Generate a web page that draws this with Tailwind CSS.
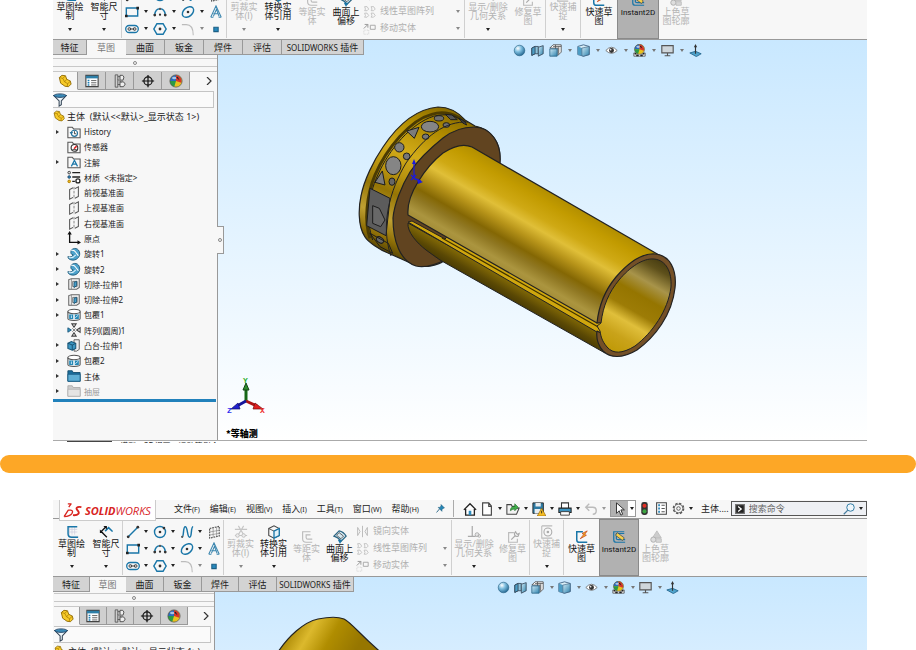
<!DOCTYPE html>
<html lang="zh-CN">
<head>
<meta charset="utf-8">
<title>SOLIDWORKS</title>
<script src="https://cdn.jsdelivr.net/npm/@tailwindcss/browser@4"></script>
</head>
<body class="flex h-screen flex-col overflow-hidden bg-white font-['Noto_Sans','Noto_Sans_CJK_SC',sans-serif] text-[9px] leading-[9px] text-[#222]">

<svg class="absolute size-0" aria-hidden="true">
  <defs>
    <linearGradient id="tube" gradientUnits="userSpaceOnUse" x1="565" y1="201" x2="520" y2="279">
      <stop offset="0" stop-color="#b38f00"/><stop offset=".12" stop-color="#c29b00"/><stop offset=".3" stop-color="#cfa914"/><stop offset=".42" stop-color="#e0bf38"/><stop offset=".55" stop-color="#b8951a"/><stop offset=".7" stop-color="#846704"/><stop offset=".8" stop-color="#8f7722"/><stop offset=".93" stop-color="#ab953f"/><stop offset="1" stop-color="#a58e38"/>
    </linearGradient>
    <linearGradient id="under" gradientUnits="userSpaceOnUse" x1="510" y1="279" x2="498" y2="300">
      <stop offset="0" stop-color="#8a7007"/><stop offset=".5" stop-color="#5a4804"/><stop offset="1" stop-color="#3a2f05"/>
    </linearGradient>
    <linearGradient id="bore" gradientUnits="userSpaceOnUse" x1="665" y1="258" x2="612" y2="350">
      <stop offset="0" stop-color="#3e350d"/><stop offset=".13" stop-color="#5e501b"/><stop offset=".28" stop-color="#a8944a"/><stop offset=".42" stop-color="#957500"/><stop offset=".58" stop-color="#9d7c06"/><stop offset=".7" stop-color="#e0bf3b"/><stop offset=".85" stop-color="#c9a31a"/><stop offset="1" stop-color="#c09a08"/>
    </linearGradient>
    <linearGradient id="flange" gradientUnits="userSpaceOnUse" x1="440" y1="107" x2="372" y2="250">
      <stop offset="0" stop-color="#8b6d00"/><stop offset=".15" stop-color="#b08b00"/><stop offset=".35" stop-color="#d2ab18"/><stop offset=".5" stop-color="#b89310"/><stop offset=".62" stop-color="#957505"/><stop offset=".78" stop-color="#bfa032"/><stop offset=".9" stop-color="#8c6d06"/><stop offset="1" stop-color="#4a3b05"/>
    </linearGradient>
    <linearGradient id="cap" gradientUnits="userSpaceOnUse" x1="290" y1="625" x2="350" y2="660">
      <stop offset="0" stop-color="#a58200"/><stop offset=".3" stop-color="#dcb92d"/><stop offset=".6" stop-color="#b08d00"/><stop offset="1" stop-color="#967600"/>
    </linearGradient>
    <linearGradient id="blueFace" x1="0" y1="0" x2="1" y2="1"><stop offset="0" stop-color="#cfeaf6"/><stop offset="1" stop-color="#2f83ae"/></linearGradient>
    <radialGradient id="ballFill" cx=".35" cy=".3" r=".8"><stop offset="0" stop-color="#fff"/><stop offset=".4" stop-color="#7fbfe0"/><stop offset="1" stop-color="#175a85"/></radialGradient>
  </defs>

  <symbol id="part" viewBox="0 0 16 16"><path d="M1.500 4l3-2.500 4 .5 1.500 4 4 2 1 3.500-3 3-4-.5-5-3.500z" fill="#f7ca28" stroke="#8a6500"/><path d="M1.500 4l4 1 2 4 3.500 2-.5 3.500M5.500 5l3-3M7.500 9L10 6M11 11l3.500-3" fill="none" stroke="#a37800" stroke-width=".8"/></symbol>
  <symbol id="list" viewBox="0 0 16 16"><path d="M1 1.500h14v13H1z" fill="#fff" stroke="#444" stroke-width="1.300"/><path d="M1 2h14v3H1z" fill="#2d7fa8"/><path d="M3 7.500h2M3 10h2M3 12.500h2" stroke="#1b7db3" stroke-width="1.600"/><path d="M7 7.500h6M7 10h6M7 12.500h6" stroke="#555"/></symbol>
  <symbol id="props" viewBox="0 0 16 16"><path d="M2 1h12v14H2z" fill="#fff" stroke="#444" stroke-width="1.300"/><path d="M4 4h2M4 8h2M4 12h2" stroke="#1b7db3" stroke-width="2.200"/><path d="M8 4h4M8 8h4M8 12h4" stroke="#555" stroke-width="1.300"/></symbol>
  <symbol id="config" viewBox="0 0 16 16"><path d="M2.500 1h3v14h-3zM5.500 3h3M5.500 12h3" fill="none" stroke="#555"/><path d="M8 1.500h3l1.500 2-1 3.500H8zM8 9h4l2 2.500-2 3H8z" fill="#eee" stroke="#444"/><path d="M5.500 6l4 4" stroke="#555"/></symbol>
  <symbol id="target" viewBox="0 0 16 16"><circle cx="8" cy="8" r="4.700" fill="none" stroke="#111" stroke-width="1.400"/><path d="M8 1v14M1 8h14" stroke="#111" stroke-width="1.400"/></symbol>
  <symbol id="ball4" viewBox="0 0 16 16"><circle cx="8" cy="8" r="7" fill="#e8c21e"/><path d="M8 8V1a7 7 0 0 0-7 7z" fill="#2a6bc0"/><path d="M8 8V1a7 7 0 0 1 6 9z" fill="#d8352c"/><path d="M8 8L1 8a7 7 0 0 0 5 6.700z" fill="#2b9b45"/><path d="M8 4l4 3-2-4z" fill="#222"/><circle cx="8" cy="8" r="7" fill="none" stroke="#555" stroke-width=".8"/><ellipse cx="6" cy="4.500" rx="2.500" ry="1.500" fill="#fff" opacity=".6"/></symbol>
  <symbol id="funnel" viewBox="0 0 16 16"><path d="M1 3l6 6v6l2.500-1.500V9L15 3z" fill="#eef6fa" stroke="#345" stroke-width="1.200"/><ellipse cx="8" cy="3" rx="7" ry="2" fill="#3a8bb8" stroke="#246"/></symbol>
  <symbol id="folderBox" viewBox="0 0 16 16"><path d="M1 2.500h5l1.500 2H15v10H1z" fill="#f8f8f8" stroke="#555" stroke-width="1.200"/></symbol>
  <symbol id="history" viewBox="0 0 16 16"><use href="#folderBox"/><circle cx="8.500" cy="9.500" r="3.500" fill="#fff" stroke="#27739c" stroke-width="1.300"/><path d="M8.500 7v3h2" fill="none" stroke="#333"/><path d="M3 8l2 3 2-3z" fill="#27739c"/></symbol>
  <symbol id="sensor" viewBox="0 0 16 16"><use href="#folderBox"/><circle cx="8.500" cy="9" r="3.800" fill="#fff" stroke="#333" stroke-width="1.300"/><path d="M8 10l3-3" stroke="#d22" stroke-width="1.800"/><path d="M6 11h5" stroke="#333"/></symbol>
  <symbol id="annot" viewBox="0 0 16 16"><use href="#folderBox"/><path d="M5 13l3.500-7 3.500 7M6.500 10.500h4" fill="none" stroke="#1a77a9" stroke-width="1.400"/></symbol>
  <symbol id="material" viewBox="0 0 16 16"><path d="M6 3h9M6 8h9M6 13h3" stroke="#222" stroke-width="1.700"/><circle cx="2.500" cy="3" r="1.500" fill="#ddd" stroke="#333"/><circle cx="2.500" cy="8" r="1.500" fill="#2a8cc0" stroke="#246"/><circle cx="2.500" cy="13" r="1.500" fill="#f0bd1d" stroke="#a70"/><circle cx="12.500" cy="12.500" r="2.300" fill="#fff" stroke="#222" stroke-width="1.500"/></symbol>
  <symbol id="plane" viewBox="0 0 16 16"><path d="M7 2L3 4v11l4-2M9 3l4-2v11l-4 2" fill="none" stroke="#555" stroke-width="1.200"/><path d="M8 1v14" stroke="#777" stroke-dasharray="3 1.500"/></symbol>
  <symbol id="origin" viewBox="0 0 16 16"><path d="M3 2v11h11" fill="none" stroke="#111" stroke-width="1.500"/><path d="M3 0L.500 4h5zM16 13l-4-2.500v5z" fill="#111"/></symbol>
  <symbol id="revolve" viewBox="0 0 16 16"><path d="M4.500 5C5 1 12 0 14 5c2 5-2 10-7 10-4 0-6-2-6-4 3 1 5 0 6-2-2 0-3-2-2.500-4z" fill="#4da2cb" stroke="#1a5677"/><path d="M5 4q3-1 5 2l3 4" fill="none" stroke="#fff" stroke-width="1.300"/><path d="M2 12q5 1 8-3" fill="none" stroke="#d8f0fb" stroke-width="1.200"/></symbol>
  <symbol id="cut" viewBox="0 0 16 16"><path d="M2 3l3-1h9v10l-3 2H2z" fill="#f4f4f4" stroke="#666" stroke-width="1.200"/><path d="M5 2v12" stroke="#888"/><path d="M6.500 5h5v6h-5z" fill="#fff" stroke="#666"/><path d="M8 6l3-1v5l-3 2z" fill="#4a9fc8" stroke="#1a5677"/></symbol>
  <symbol id="wrap" viewBox="0 0 16 16"><path d="M1 4v8c0 3 14 3 14 0V4" fill="#e3eef3" stroke="#555" stroke-width="1.200"/><ellipse cx="8" cy="4" rx="7" ry="2.500" fill="#fff" stroke="#555" stroke-width="1.200"/><path d="M2.500 7.500h4.500v5H2.500zM9 7.500h4.500v5H9z" fill="#2488b5"/><path d="M5 8.500v3M9.500 11l3-2.500" stroke="#def"/></symbol>
  <symbol id="pattern" viewBox="0 0 16 16"><path d="M5.500 1h5L8 5z M5.500 15h5L8 11zM15 5.500v5L11 8z" fill="#f4f4f4" stroke="#444" stroke-width="1.200"/><path d="M1 5.500v5L5 8z" fill="#3a9ac8" stroke="#1a5677"/><path d="M6 6l4 4M10 6l-4 4" stroke="#777"/></symbol>
  <symbol id="boss" viewBox="0 0 16 16"><path d="M8 2h6v11l-3 2H8z" fill="#eee" stroke="#555"/><path d="M1 6l4-2 5 2v6l-4 2-5-2z" fill="#3d98c4" stroke="#1a5677" stroke-width="1.200"/><path d="M1 6l5 2 4-2M6 8v6" fill="none" stroke="#174c69"/></symbol>
  <symbol id="folder" viewBox="0 0 16 16"><path d="M1 2h5l1 2h8v10H1z" fill="#1b6d9b" stroke="#134b6b"/><path d="M1 6h14v8H1z" fill="#5faed4" stroke="#1a5d85"/></symbol>
  <symbol id="folderGray" viewBox="0 0 16 16"><path d="M1 2h5l1 2h8v10H1z" fill="#ccc" stroke="#aaa"/><path d="M1 6h14v8H1z" fill="#e4e4e4" stroke="#b5b5b5"/></symbol>

  <symbol id="sketch" viewBox="0 0 16 16"><path d="M5 2v11h10M8 2v9M11 2v9M5 5h9M5 8h9" fill="none" stroke="#ccd" stroke-width=".8"/><path d="M14 2H3.500v8q0 4 4 4H15" fill="none" stroke="#1976a8" stroke-width="1.700"/></symbol>
  <symbol id="dim" viewBox="0 0 16 16"><path d="M7 7l4-4 4.500 4.500" fill="none" stroke="#1976a8" stroke-width="1.800"/><path d="M2 8l6-6M3 8l6 6" stroke="#111" stroke-width="1.500"/><path d="M1 5v4h4zM9 1H5l4 4z" fill="#111"/></symbol>
  <symbol id="line" viewBox="0 0 16 16"><path d="M2 14L14 2" stroke="#1976a8" stroke-width="1.600"/><circle cx="2.500" cy="13.500" r="1.600" fill="#333"/><circle cx="13.500" cy="2.500" r="1.600" fill="#333"/></symbol>
  <symbol id="circle" viewBox="0 0 16 16"><circle cx="8" cy="8" r="6.300" fill="none" stroke="#1976a8" stroke-width="1.600"/><circle cx="8" cy="8" r="1.500" fill="#333"/><circle cx="12.500" cy="3.500" r="1.500" fill="#333"/></symbol>
  <symbol id="spline" viewBox="0 0 16 16"><path d="M2 14C5 14 3 2 6 2s2 12 5 12 1-12 4-12" fill="none" stroke="#1976a8" stroke-width="1.700"/><circle cx="2.500" cy="13.500" r="1.300" fill="#555"/></symbol>
  <symbol id="gridplane" viewBox="0 0 16 16"><path d="M3 4l11-2.500v11L3 15z" fill="none" stroke="#555" stroke-width="1.300" stroke-dasharray="2 1"/><path d="M7 3v11M11 2v11M3 8l11-2M3 11.500l11-2" stroke="#888" stroke-width=".8"/></symbol>
  <symbol id="rect" viewBox="0 0 16 16"><path d="M1.500 3.500h13v9h-13z" fill="none" stroke="#1976a8" stroke-width="1.600"/><path d="M0 11h3v3H0zM13 2h3v3h-3z" fill="#222"/></symbol>
  <symbol id="arc" viewBox="0 0 16 16"><path d="M2 11C3 2 13 2 14 11" fill="none" stroke="#1976a8" stroke-width="1.600"/><circle cx="2" cy="11.500" r="1.600" fill="#333"/><circle cx="14" cy="11.500" r="1.600" fill="#333"/><circle cx="8" cy="11" r="1.300" fill="#333"/><circle cx="8" cy="4.500" r="1.300" fill="#555"/></symbol>
  <symbol id="ellipse" viewBox="0 0 16 16"><ellipse cx="8" cy="8" rx="7.300" ry="5" transform="rotate(-40 8 8)" fill="none" stroke="#1976a8" stroke-width="1.600"/><circle cx="8" cy="8" r="1.500" fill="#333"/></symbol>
  <symbol id="glyphA" viewBox="0 0 16 16"><path d="M2 14L8 1l6 13M5 10h6M2 14h3M11 14h3M5 13l3.500-8 3 8" fill="none" stroke="#3b86af" stroke-width="1.200"/></symbol>
  <symbol id="slot" viewBox="0 0 16 16"><rect x=".8" y="4" width="14.400" height="8" rx="4" fill="none" stroke="#1976a8" stroke-width="1.500"/><circle cx="5" cy="8" r="1.600" fill="none" stroke="#333"/><circle cx="11" cy="8" r="1.600" fill="none" stroke="#333"/><path d="M5 8h6" stroke="#333"/></symbol>
  <symbol id="hex" viewBox="0 0 16 16"><path d="M4.500 2h7L15 8l-3.500 6h-7L1 8z" fill="none" stroke="#1976a8" stroke-width="1.700"/><circle cx="8" cy="8" r="1.600" fill="#333"/></symbol>
  <symbol id="fillet" viewBox="0 0 16 16"><path d="M1 3h5q8 0 8 12" fill="none" stroke="#bbb" stroke-width="1.200"/></symbol>
  <symbol id="point" viewBox="0 0 16 16"><path d="M5.500 6h5v5h-5z" fill="#2888bb" stroke="#1d5f85" stroke-width="1.200"/></symbol>
  <symbol id="trim" viewBox="0 0 16 16"><path d="M1 5h14M1 12h14M5 1l6 10M11 1L5 11" fill="none" stroke="#c4c4c4" stroke-width="1.200"/><circle cx="4" cy="12" r="2" fill="#eee" stroke="#bbb"/><circle cx="11" cy="12" r="2" fill="#eee" stroke="#bbb"/></symbol>
  <symbol id="convert" viewBox="0 0 16 16"><path d="M2 4l6-3 6 3v8l-6 3-6-3z" fill="#f6f6f6" stroke="#444" stroke-width="1.200"/><path d="M2 4l6 3 6-3" fill="none" stroke="#444"/><path d="M8 7v8l6-3V4z" fill="#e2f1f8" stroke="#1976a8" stroke-width="1.500"/></symbol>
  <symbol id="offset" viewBox="0 0 16 16"><path d="M12 2H3v8q0 4 4 4h7M12 5.500H7v3q0 2 2 2h5" fill="none" stroke="#bbb" stroke-width="1.300"/></symbol>
  <symbol id="surfoff" viewBox="0 0 16 16"><path d="M1 7l6-6q5 1 8 6l-6 6q-2-4-8-6z" fill="#d6e9f2" stroke="#2b6583" stroke-width="1.400"/><path d="M4 6l3-3 5 4-3 3z" fill="none" stroke="#555"/><path d="M5.500 11l2.500 5 2.500-5z" fill="#1976a8"/></symbol>
  <symbol id="mirror" viewBox="0 0 16 16"><path d="M2 3v10l3-5zM14 3v10l-3-5zM8 1v14" fill="none" stroke="#bbb" stroke-width="1.200"/></symbol>
  <symbol id="lpattern" viewBox="0 0 16 16"><path d="M2 2h3l2 3-2 2H2l1-2zM10 2h3l2 3-2 2h-3l1-2zM2 10h3l2 3-2 2H2l1-2zM10 10h3l2 3-2 2h-3l1-2z" fill="none" stroke="#bbb"/></symbol>
  <symbol id="move" viewBox="0 0 16 16"><path d="M9 4h6v5H9z" fill="none" stroke="#aaa" stroke-width="1.200"/><path d="M1 8l5-5M2 3h4v4" fill="none" stroke="#999" stroke-width="1.200"/><path d="M1 10h6v5H1z" fill="none" stroke="#ccc" stroke-dasharray="1 1"/></symbol>
  <symbol id="relation" viewBox="0 0 16 16"><path d="M6 1v12M1 13h9" stroke="#aaa" stroke-width="1.400"/><circle cx="11.500" cy="11" r="2.200" fill="#e5e5e5" stroke="#aaa"/><circle cx="14" cy="12.500" r="1.500" fill="none" stroke="#aaa"/></symbol>
  <symbol id="repair" viewBox="0 0 16 16"><path d="M9 3H3v11h10v-4" fill="none" stroke="#bbb" stroke-width="1.300"/><path d="M6 11l5-5M11 2q-2 2-1 4t4 1l1-3-2 1-1-1z" fill="none" stroke="#aaa" stroke-width="1.300"/></symbol>
  <symbol id="snap" viewBox="0 0 16 16"><path d="M2 1v14h12M2 1h12" fill="none" stroke="#bbb" stroke-width="1.200"/><circle cx="9" cy="8" r="4.500" fill="none" stroke="#aaa" stroke-width="1.200"/><circle cx="9" cy="8" r="1.500" fill="#aaa"/></symbol>
  <symbol id="rapid" viewBox="0 0 16 16"><path d="M9 2H2v9q0 3 3 3h9" fill="none" stroke="#1976a8" stroke-width="1.700"/><path d="M14 1L8 4l2 1-4 5 7-4-2-1z" fill="#f5b21c" stroke="#c0391b" stroke-width=".8"/></symbol>
  <symbol id="instant" viewBox="0 0 16 16"><path d="M14 2H2v9q0 3 3 3h10M14 4H5v6q0 1 2 1h8" fill="none" stroke="#1976a8" stroke-width="1.400"/><path d="M6 3l8 6-2 3-8-6z" fill="#f4d04a" stroke="#444" stroke-width=".8"/></symbol>
  <symbol id="shade" viewBox="0 0 16 16"><path d="M9 1l5 8H4z" fill="#ccc" stroke="#bbb"/><circle cx="5" cy="11" r="3" fill="#ddd" stroke="#aaa"/><path d="M8 10h6v4H8z" fill="#d6d6d6" stroke="#bbb"/></symbol>

  <symbol id="zoomball" viewBox="0 0 16 16"><circle cx="8" cy="8" r="6.500" fill="url(#ballFill)" stroke="#2a6486" stroke-width=".8"/></symbol>
  <symbol id="section" viewBox="0 0 16 16"><path d="M1 5l4-2h4v9H5l-4 2z" fill="#8fc2da" stroke="#345"/><path d="M1 5l4-2v9l-4 2z" fill="#4c9cc4" stroke="#345"/><path d="M9 4l6-2v10l-6 3z" fill="url(#blueFace)" stroke="#345"/></symbol>
  <symbol id="viewcube" viewBox="0 0 16 16"><path d="M5 1h10v9l-4 4V5H1z" fill="#fff" stroke="#444"/><path d="M8 1v9M5 3h10M12 3v9" stroke="#555"/><path d="M1 6h9v9H1z" fill="url(#blueFace)" stroke="#2a6486"/></symbol>
  <symbol id="cube" viewBox="0 0 16 16"><path d="M1 3l7-2 7 2v10l-7 2-7-2z" fill="#d8edf6" stroke="#357"/><path d="M1 3l5 2v9.500L1 13z" fill="#4c9cc4"/><path d="M6 5l9-2v10l-7 2-2-.5z" fill="url(#blueFace)" stroke="#357" stroke-width=".7"/></symbol>
  <symbol id="eye" viewBox="0 0 16 16"><path d="M1 8q7-8 14 0-7 7-14 0z" fill="#fff" stroke="#666"/><circle cx="8" cy="8" r="3" fill="#333"/><circle cx="7" cy="7" r="1" fill="#fff"/></symbol>
  <symbol id="scene" viewBox="0 0 16 16"><path d="M1 11h14v4H1z" fill="#eee" stroke="#333" stroke-width=".8"/><path d="M2 11h2v2H2zM12 11h2v2h-2zM4 13h3v2H4zM9 13h3v2H9z" fill="#222"/><g transform="translate(1 -.5) scale(.88)"><use href="#ball4"/></g></symbol>
  <symbol id="monitor" viewBox="0 0 16 16"><path d="M1 2h14v9H1z" fill="#cfd6db" stroke="#555" stroke-width="1.400"/><path d="M8 11v3M4.500 14.500h7" stroke="#555" stroke-width="1.400"/></symbol>
  <symbol id="normal" viewBox="0 0 16 16"><path d="M1 11l7-2 7 3-6 3.500z" fill="#4fa3cc" stroke="#1d6088"/><path d="M8 12V2" stroke="#333" stroke-width="1.400"/><path d="M8 0L6 4h4z" fill="#333"/></symbol>

  <symbol id="home" viewBox="0 0 16 16"><path d="M1 9l7-7 7 7M3 8v7h10V8" fill="#fff" stroke="#222" stroke-width="1.500"/><path d="M6.500 10h3v5h-3z" fill="#2c8bbd"/></symbol>
  <symbol id="file" viewBox="0 0 16 16"><path d="M3 1h7l3 3.500V15H3zM10 1v4h3" fill="#fff" stroke="#444" stroke-width="1.300"/></symbol>
  <symbol id="open" viewBox="0 0 16 16"><path d="M1 14V3h5l1 2h4l1 2h3l-3 7z" fill="#f2f2f2" stroke="#444" stroke-width="1.200"/><path d="M5 10q0-5 5-5V2l4 4-4 4V8q-3 0-5 2z" fill="#3fae49" stroke="#1f6d29" stroke-width=".7"/></symbol>
  <symbol id="save" viewBox="0 0 16 16"><path d="M1 1h12v12H1z" fill="#2d7aa3" stroke="#222"/><path d="M4 1h6v4H4zM3 8h7v5H3z" fill="#e9eef1"/><path d="M11 7l5 9H6z" fill="#f6be24" stroke="#8a5c00" stroke-width=".7"/><path d="M11 10v3" stroke="#222"/></symbol>
  <symbol id="print" viewBox="0 0 16 16"><path d="M4 7V1h8v6" fill="#fff" stroke="#333" stroke-width="1.200"/><path d="M1 7h14v5H1z" fill="#3c94c1" stroke="#222" stroke-width="1.200"/><path d="M3 11h10v4H3z" fill="#fff" stroke="#333"/></symbol>
  <symbol id="undo" viewBox="0 0 16 16"><path d="M2 6h8q4 0 4 4t-4 4M6 2L2 6l4 4" fill="none" stroke="#bbb" stroke-width="1.600"/></symbol>
  <symbol id="cursor" viewBox="0 0 16 16"><path d="M4 1v12l3-3 2 5 2-1-2-5h4z" fill="#fff" stroke="#222"/></symbol>
  <symbol id="light" viewBox="0 0 16 16"><rect x="4" y="0" width="8" height="16" rx="3" fill="#333"/><circle cx="8" cy="4.500" r="2.500" fill="#e22f25"/><circle cx="8" cy="11.500" r="2.500" fill="#3ca541"/></symbol>
  <symbol id="gear" viewBox="0 0 16 16"><circle cx="8" cy="8" r="6.200" fill="none" stroke="#555" stroke-width="2" stroke-dasharray="2.870 2"/><circle cx="8" cy="8" r="5.300" fill="#f7f7f7" stroke="#555"/><circle cx="8" cy="8" r="2.200" fill="none" stroke="#555" stroke-width="1.100"/></symbol>
  <symbol id="prompt" viewBox="0 0 16 16"><path d="M0 0h16v16H0z" fill="#777"/><path d="M2 2h12v12H2z" fill="#222"/><path d="M5 4l5 4-5 4" fill="none" stroke="#fff" stroke-width="2"/></symbol>
  <symbol id="search" viewBox="0 0 16 16"><circle cx="10" cy="6" r="5" fill="#eef6fb" stroke="#2f7aa3" stroke-width="1.300"/><path d="M6.500 9.500L1 15" stroke="#4a7f9f" stroke-width="1.700"/></symbol>
  <symbol id="pin" viewBox="0 0 16 16"><path d="M9 1l6 6-2 .5-2.500 2.500v3L4 6h3l2-2.500z" fill="#2585b5" stroke="#145779"/><path d="M6 9l-5 6" stroke="#145779" stroke-width="1.500"/></symbol>
  <symbol id="ds" viewBox="0 0 20 16"><path d="M5 1h3.500L6 4.500M1 14.500L5.500 7.500H8q3 .5 1.500 3.500-2 3-8.500 3.500" fill="none" stroke="#d8241f" stroke-width="1.400" stroke-linejoin="round"/><path d="M19.500 4.500c-5-1-6.500 1-4 3.500s1 5.500-5 5" fill="none" stroke="#d8241f" stroke-width="1.900"/></symbol>
</svg>

<section id="first" class="relative mr-[49px] ml-[53px] shrink-0 overflow-hidden bg-[#f7f7f7]"></section>
<div class="mt-3 h-[18px] shrink-0 rounded-full bg-[#fda726]"></div>
<section id="second" class="mt-[27px] mr-[49px] ml-[53px] flex min-h-0 flex-1 flex-col overflow-hidden bg-[#f7f7f7]"></section>

<template id="model">
  <svg class="absolute inset-0 h-full w-full" role="img" aria-label="主体">
    <g transform="translate(-218 -40)" stroke-linejoin="round">
      <path d="M438 107C450 107 458 112 465 120L475 126C492 129 503 145 499 164L445 260C438 266 425 268 415 265L388 253C380 250 368 242 365 237C357 225 359 205 361 196C364 180 374 160 383 147C397 126 415 109 438 107Z" fill="url(#flange)" stroke="#222" stroke-width="1.200"/>
      <g transform="translate(350 95) scale(.33333)" stroke="#1c1c1c" stroke-width="3">
        <path d="M60 430C42 380 50 300 75 240C110 160 180 75 245 58C280 48 320 55 345 83" fill="none" stroke="#4b3b02" stroke-width="9"/>
        <path d="M68 435C48 380 55 300 82 243C118 160 185 85 250 64C290 54 320 60 340 82" fill="none"/>
        <path d="M60 280L120 310L108 422L50 392Z" fill="#5c5c5c"/>
        <path d="M68 332L88 340L105 375L92 395L68 385Z" fill="#686868"/>
        <path d="M170 108L207 97L193 130ZM75 262L97 228L105 270Z" fill="#7c7c7c"/>
        <ellipse cx="240" cy="95" rx="26" ry="16" fill="#858585"/><ellipse cx="267" cy="70" rx="14" ry="8" fill="#707070"/>
        <ellipse cx="289" cy="90" rx="10" ry="7" fill="#707070"/><ellipse cx="227" cy="125" rx="10" ry="8" fill="#777"/>
        <circle cx="148" cy="157" r="14" fill="#7d7d7d"/><ellipse cx="130" cy="212" rx="23" ry="27" fill="#858585"/>
        <circle cx="170" cy="184" r="10" fill="#777"/><ellipse cx="126" cy="260" rx="9" ry="11" fill="#666"/>
        <path d="M286 58L306 60L322 74L302 74ZM328 70L345 80L350 90L338 84Z" fill="#555"/>
        <ellipse cx="90" cy="435" rx="12" ry="8" fill="#666" transform="rotate(35 90 435)"/>
        <path d="M60 415L115 445L128 475L90 455Z" fill="none"/>
      </g>
      <path d="M391 256C380 225 390 190 406 163C425 136 445 121 468 122" fill="none" stroke="#222"/>
      <path d="M474 127C490 127 502 142 500 164L445 260C435 265 425 268 416 266C400 261 393 241 393 218C394 205 402 185 410 172C420 157 433 146 443 138C452 131 463 127 474 127Z" fill="#614420" stroke="#222" stroke-width="1.200"/>
      <path d="M408 223C407 232 417 243 426 250L440 260L605 353L612 340L600 330Z" fill="url(#under)" stroke="#222"/>
      <path d="M408 222L412 221L445 239L447 237L602 323L602 335Z" fill="#cfa60d" stroke="#222"/>
      <path d="M442 238L600 328" stroke="#3d3000" stroke-width="1.200"/>
      <path d="M472 147L659 255L640 300L597 323L408 215C407 203 413 190 418 182C424 172 434 160 443 153C452 147 463 143 472 147Z" fill="url(#tube)" stroke="#222" stroke-width="1.200"/>
      <path d="M597 323C599 304 606 289 616 277C628 263 642 253 655 254C670 255 677 270 675 288C672 315 655 337 637 350C622 359 610 358 603 351C598 345 596 338 597 331L601 333C602 320 601 323 597 323Z" fill="#745027" stroke="#222" stroke-width="1.200"/>
      <path d="M601 323C603 306 609 292 619 280C630 267 643 258 654 259C666 260 672 272 671 287C668 311 652 333 635 346C622 354 613 354 607 347C602 341 601 337 600 331L597 326Z" fill="url(#bore)" stroke="#222"/>
      <path d="M414 178V163M414 178L421 181M411 175l5 5M411 180l5-5" stroke="#1a1ae0" stroke-width="1.200"/><path d="M414 159l-2 5h4zM423 182l-6-3 1 5z" fill="#1a1ae0"/>
      <path d="M246 401V389" stroke="#176817" stroke-width="3"/><path d="M246 383l-3 7h6z" fill="#2e8c2e" stroke="#134513"/>
      <path d="M246 401L257 406" stroke="#b01515" stroke-width="3"/><path d="M263 409l-8-6-2 6z" fill="#e02020" stroke="#701010" stroke-width=".7"/>
      <path d="M246 401L237 406" stroke="#15159c" stroke-width="3"/><path d="M231 409l7-6 2 6z" fill="#2020d0" stroke="#101060" stroke-width=".7"/>
      <g font-family="Liberation Mono" font-size="8" font-weight="bold"><text x="243" y="383" fill="#30b030">Y</text><text x="260" y="413" fill="#f03030">X</text><text x="227" y="413" fill="#3030f0">Z</text></g>
      <text x="226" y="437" font-size="9" font-weight="900" fill="#000" font-family="Noto Sans CJK SC">*等轴测</text>
    </g>
  </svg>
</template>

<template id="modelTop">
  <svg class="absolute inset-0 h-full w-full" role="img" aria-label="主体">
    <g transform="translate(-215 -577)"><path d="M276 655C288 636 304 622 318 619C328 617 339 617 344 619C352 623 360 635 384 655Z" fill="url(#cap)" stroke="#222" stroke-width="1.200"/></g>
  </svg>
</template>

<script>
const icon = (id, cls = 'size-[14px]') => `<svg class="${cls} shrink-0" aria-hidden="true"><use href="#${id}"/></svg>`;
const caret = (tone = 'border-t-[#222]') => `<i class="block size-0 shrink-0 border-x-2 border-t-[3px] border-x-transparent ${tone}"></i>`;
const sep = '<i class="my-px w-px shrink-0 bg-[#d0d0d0]"></i>';

// Large command button: a drop-down variant sits higher to leave room for its caret.
function command(id, lines, width, { off = false, drop = '', on = false } = {}) {
  const tone = off ? 'text-[#b4b4b4]' : 'text-[#111]';
  const pad = drop ? 'pt-[6px]' : on ? 'pt-[10px]' : 'pt-[11px]';
  const fill = on ? 'bg-[#b1b1b1] border border-[#8a8a8a] text-[8px]' : '';
  return `<button class="flex shrink-0 flex-col items-center ${width} ${tone} ${pad} ${fill}">${icon(id)}<span class="mt-px whitespace-nowrap text-center">${lines.join('<br>')}</span>${drop ? `<span class="mt-[7px]">${caret(drop)}</span>` : ''}</button>`;
}

function ribbon(w) {
  const dark = 'border-t-[#222]', gray = 'border-t-[#888]';
  const tool = id => `<button aria-label="${id}" class="flex items-center justify-center">${icon(id)}</button>`;
  const c = t => `<span class="flex justify-center">${caret(t)}</span>`;
  const row = (id, label, drop) => `<button class="flex h-[17px] items-center text-[#b0b0b0]">${icon(id, 'size-[13px]')}<span class="ml-1 flex-1 text-left">${label}</span>${drop ? caret(gray) : ''}</button>`;
  return `<div class="flex h-[57px] shrink-0 overflow-hidden font-['Roboto','Noto_Sans_CJK_SC',sans-serif]">
    ${command('sketch', ['草图绘', '制'], w.a, { drop: dark })}${command('dim', ['智能尺', '寸'], w.b, { drop: dark })}${sep}
    <div class="grid shrink-0 content-start items-center pt-1 auto-rows-[17px] ${w.grid}">
      ${tool('line')}${c(dark)}${tool('circle')}${c(dark)}${tool('spline')}${c(dark)}${tool('gridplane')}
      ${tool('rect')}${c(dark)}${tool('arc')}${c(dark)}${tool('ellipse')}${c(dark)}${tool('glyphA')}
      ${tool('slot')}${c(dark)}${tool('hex')}${c(dark)}${tool('fillet')}${c(gray)}${tool('point')}
    </div>${sep}
    ${command('trim', ['剪裁实', '体(I)'], w.c, { off: true, drop: gray })}${command('convert', ['转换实', '体引用'], w.c, { drop: dark })}
    ${command('offset', ['等距实', '体'], w.c, { off: true })}${command('surfoff', ['曲面上', '偏移'], w.c)}
    <div class="flex shrink-0 flex-col pt-1 pr-1 ${w.list}">${row('mirror', '镜向实体')}${row('lpattern', '线性草图阵列', true)}${row('move', '移动实体', true)}</div>${sep}
    ${command('relation', ['显示/删除', '几何关系'], w.rel, { off: true, drop: dark })}${command('repair', ['修复草', '图'], w.c, { off: true })}${sep}
    ${command('snap', ['快速捕', '捉'], w.c, { off: true, drop: dark })}${sep}
    ${command('rapid', ['快速草', '图'], w.rapid)}${command('instant', ['Instant2D'], w.inst, { on: true })}${command('shade', ['上色草', '图轮廓'], w.c, { off: true })}
  </div>`;
}

function tabs(widths) {
  const names = ['特征', '草图', '曲面', '钣金', '焊件', '评估', '<span class="text-[8px]">SOLIDWORKS</span> 插件'];
  return names.map((n, i) => `<button class="h-[15px] shrink-0 whitespace-nowrap border-r border-b font-['Noto_Sans','Noto_Sans_CJK_SC',sans-serif] ${i === 1 ? 'border-transparent bg-[#f7f7f7] text-[#777]' : 'border-[#999] bg-[#d3d3d3] text-[#222]'} ${widths[i]}">${n}</button>`).join('');
}

function panelHead(firstTab, tab) {
  const ids = ['part', 'list', 'config', 'target', 'ball4'];
  return `<div class="mt-[2px] flex h-[9px] items-center justify-center border-y border-[#c8c8c8]"><i class="size-1 rounded-full border border-[#888]"></i></div>
    <div class="mt-1 flex items-center border-t border-[#c8c8c8]">
      ${ids.map((id, i) => `<button aria-label="${id}" class="flex h-[18px] items-center justify-center border-r border-b ${i ? 'border-[#999] bg-[#cfcfcf]' : 'border-[#999] border-b-transparent bg-[#f7f7f7]'} ${i ? tab : firstTab}">${icon(id)}</button>`).join('')}
      <button aria-label="更多" class="ml-auto mr-1 flex size-2 items-center justify-center"><svg class="size-2" viewBox="0 0 8 8"><path d="M2 0l4 4-4 4" fill="none" stroke="#333" stroke-width="1.200"/></svg></button>
    </div>
    <label class="mt-px mr-[3px] flex h-[17px] items-center border border-l-0 border-[#c4c4c4] bg-[#fafafa]">${icon('funnel')}<input aria-label="过滤" class="min-w-0 flex-1 outline-none"></label>
    <div class="flex h-[16px] items-center gap-[2px] whitespace-pre text-[9px]">${icon('part', 'size-[12px]')}<span>主体  (默认&lt;&lt;默认&gt;_显示状态 1&gt;)</span></div>`;
}

const features = [['history', 'History', 1], ['sensor', '传感器'], ['annot', '注解', 1], ['material', '材质  <未指定>'], ['plane', '前视基准面'], ['plane', '上视基准面'], ['plane', '右视基准面'], ['origin', '原点'], ['revolve', '旋转1', 1], ['revolve', '旋转2', 1], ['cut', '切除-拉伸1', 1], ['cut', '切除-拉伸2', 1], ['wrap', '包覆1', 1], ['pattern', '阵列(圆周)1'], ['boss', '凸台-拉伸1', 1], ['wrap', '包覆2', 1], ['folder', '主体', 1], ['folderGray', '抽屉', 1]];
const tree = `<ul class="flex h-[275px] flex-col justify-between text-[8px]">${features.map(([id, name, open]) => `<li class="flex h-[15px] items-center whitespace-pre pl-[3px] ${id === 'folderGray' ? 'text-[#999]' : ''}"><span class="w-[11px]">${open ? '<i class="block size-0 border-y-2 border-l-[3px] border-y-transparent border-l-[#333]"></i>' : ''}</span>${icon(id)}<span class="ml-[3px]">${name.replace(/</g, '&lt;').replace(/>/g, '&gt;')}</span></li>`).join('')}</ul>`;

function hud(pad, gap, inner) {
  const ids = [['zoomball'], ['section'], ['viewcube', 1], ['cube', 1], ['eye', 1], ['scene', 1], ['monitor', 1], ['normal']];
  return `<div class="relative z-10 flex h-[14px] items-center ${pad} ${gap}">${ids.map(([id, d]) => `<button aria-label="${id}" class="flex items-center ${d ? inner : ''}">${icon(id, 'size-[13px]')}${d ? caret('border-t-[#777]') : ''}</button>`).join('')}</div>`;
}

const sizesA = { a: 'w-[34px]', b: 'w-[34px]', grid: 'grid-cols-[20px_8px_20px_8px_20px_8px_20px]', c: 'w-[34px]', list: 'w-[101px]', rel: 'w-[46px]', rapid: 'w-[36px]', inst: 'w-[42px]' };
const sizesB = { a: 'w-[37px]', b: 'w-[32px]', grid: 'grid-cols-[19px_8px_19px_8px_19px_8px_19px]', c: 'w-[33px]', list: 'w-[95px]', rel: 'w-[44px]', rapid: 'w-[35px]', inst: 'w-[40px]' };

document.getElementById('first').innerHTML = `
  <header class="flex h-[40px] flex-col justify-end overflow-hidden border-b border-[#999]">${ribbon(sizesA)}</header>
  <div class="relative">
    <nav class="absolute top-0 left-0 z-20 flex">${tabs(['w-[34px]', 'w-[39px]', 'w-[39px]', 'w-[39px]', 'w-[39px]', 'w-[39px]', 'w-[82px]'])}</nav>
    <div class="flex">
      <aside class="w-[164px] shrink-0 bg-[#f7f7f7] pt-4">${panelHead('w-[25px]', 'w-[28px]')}${tree}<div class="mr-px h-[3px] bg-[#2181bb]"></div><div class="h-[38px]"></div></aside>
      <main class="relative flex-1 border-l border-[#999] bg-linear-to-b from-[#c9e8ff] to-white pt-[3px]">
        ${hud('pl-[295px]', 'gap-[5px]', 'gap-[6px]')}
        <button aria-label="折叠" class="absolute top-[186px] -left-px z-10 flex h-[28px] w-[7px] items-center justify-center border border-l-0 border-[#999] bg-[#f7f7f7]"><i class="size-1 rounded-full border border-[#888]"></i></button>
        ${document.getElementById('model').innerHTML}
      </main>
    </div>
  </div>
  <footer class="flex h-[3px] items-start gap-2 overflow-hidden border-t border-[#aaa] bg-white pl-[14px] text-[8px]"><i class="h-px w-[45px] bg-[#444]"></i><span>模型</span><span>3D视图</span><span>运动算例 1</span></footer>`;

const menus = [['文件', 'F'], ['编辑', 'E'], ['视图', 'V'], ['插入', 'I'], ['工具', 'T'], ['窗口', 'W'], ['帮助', 'H']];
const quick = (id, label) => `<button aria-label="${label}" class="flex w-[26px] items-center gap-[4px]">${icon(id)}${caret(id === 'undo' ? 'border-t-[#999]' : 'border-t-[#222]')}</button>`;
document.getElementById('second').innerHTML = `
  <header class="relative flex h-[19px] shrink-0 items-center border-b border-[#999] pb-px pl-[121px]">
    <a href="#" class="absolute top-0 left-[6px] z-10 flex h-[21px] w-[97px] items-center gap-[3px] border border-t-0 border-[#ccc] bg-white pl-[3px] font-['Open_Sans'] text-[11px] text-[#d8241f] italic">${icon('ds', 'h-[15px] w-[19px]')}<span><b>SOLID</b>WORKS</span></a>
    <nav class="flex w-[245px] shrink-0 justify-between">${menus.map(([n, k]) => `<button class="whitespace-nowrap">${n}<span class="text-[7px]">(${k})</span></button>`).join('')}</nav>
    <button aria-label="固定" class="ml-[17px] shrink-0">${icon('pin', 'size-[9px]')}</button>
    <i class="mx-[8px] h-full w-px shrink-0 bg-[#aaa]"></i>
    <button aria-label="主页" class="mr-[3px] ml-px shrink-0">${icon('home')}</button>
    <div class="flex shrink-0">${quick('file', '新建')}${quick('open', '打开')}${quick('save', '保存')}${quick('print', '打印')}${quick('undo', '撤销')}</div>
    <button aria-label="选择" class="flex h-[17px] w-[26px] shrink-0 items-center border border-[#999] bg-white"><span class="flex h-full w-[17px] items-center justify-center bg-[#b1b1b1]">${icon('cursor')}</span><span class="ml-[2px]">${caret()}</span></button>
    <div class="ml-[2px] flex shrink-0 items-center gap-[4px]">${icon('light', 'size-[13px]')}${icon('props', 'size-[13px]')}${icon('gear', 'size-[13px]')}${caret()}</div>
    <span class="ml-2 shrink-0">主体....</span>
    <label class="ml-[2px] flex h-[15px] min-w-0 flex-1 items-center gap-1 border border-[#555] bg-[#eef0f4] px-[3px]">${icon('prompt', 'size-[10px]')}<input aria-label="搜索命令" placeholder="搜索命令" class="min-w-0 flex-1 outline-none placeholder:text-[#666]">${icon('search', 'size-[12px]')}${caret()}</label>
  </header>
  <div class="flex h-[58px] shrink-0 flex-col border-b border-[#999]">${ribbon(sizesB)}</div>
  <div class="relative flex min-h-0 flex-1">
    <nav class="absolute top-0 left-0 z-20 flex">${tabs(['w-[37px]', 'w-[36px]', 'w-[38px]', 'w-[38px]', 'w-[37px]', 'w-[38px]', 'w-[77px]'])}</nav>
    <aside class="w-[161px] shrink-0 bg-[#f7f7f7] pt-[14px] pl-px">${panelHead('w-[26px]', 'w-[27px]')}</aside>
    <main class="relative flex-1 overflow-hidden border-l border-[#999] bg-linear-to-b from-[#c9e8ff] to-[#d6edff] pt-[3px]">
      ${hud('pl-[282px]', 'gap-[4px]', 'gap-[6px]')}${document.getElementById('modelTop').innerHTML}
    </main>
  </div>`;
</script>
</body>
</html>
